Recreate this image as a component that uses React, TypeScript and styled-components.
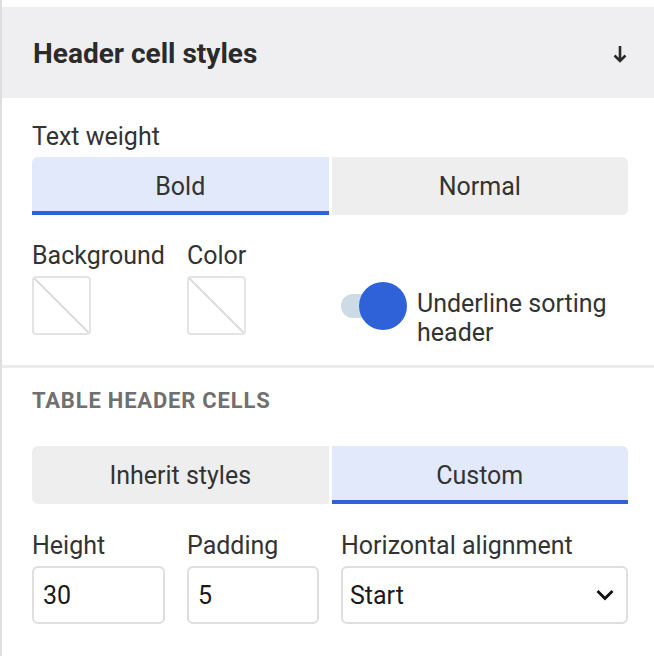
import React, { FC } from 'react';
import styled, { createGlobalStyle } from 'styled-components';

const GlobalStyle = createGlobalStyle`
  html, body {
    margin: 0;
    padding: 0;
    background: #ffffff;
  }
  body {
    font-family: Roboto, "Noto Sans", Arial, sans-serif;
    color: #2e2e2e;
  }
  * { box-sizing: border-box; }
`;

const Panel = styled.div`
  min-height: 100vh;
  border-left: 2px solid #dedede;
  padding-top: 7px;
`;

const Header = styled.div`
  height: 91px;
  background: #efeff1;
  display: flex;
  align-items: center;
  justify-content: space-between;
  padding: 2px 27px 0 31px;
`;

const Title = styled.h2`
  margin: 0;
  font-size: 28px;
  font-weight: 700;
  color: #2b2b2b;
`;

const Section = styled.div<{ $top: number; $bottom?: number }>`
  padding: ${p => p.$top}px 26px ${p => p.$bottom ?? 0}px 30px;
`;

const Label = styled.div`
  font-size: 25px;
  line-height: 30px;
  color: #333333;
  white-space: nowrap;
`;

const Caption = styled.div`
  font-size: 22px;
  line-height: 28px;
  font-weight: 700;
  letter-spacing: 0.8px;
  text-transform: uppercase;
  color: #707070;
`;

const Segmented = styled.div<{ $top: number }>`
  display: grid;
  grid-template-columns: 1fr 1fr;
  column-gap: 3px;
  height: 58px;
  margin-top: ${p => p.$top}px;
`;

const Segment = styled.div<{ $active?: boolean }>`
  display: flex;
  align-items: center;
  justify-content: center;
  font-size: 25px;
  color: #333333;
  background: ${p => (p.$active ? '#e1e9fb' : '#eeeeee')};
  border-bottom: 4px solid ${p => (p.$active ? '#2f62d8' : 'transparent')};
  padding-top: 4px;
  &:first-child {
    border-radius: ${p => (p.$active ? '6px 0 0 0' : '6px 0 0 6px')};
  }
  &:last-child {
    border-radius: ${p => (p.$active ? '0 6px 0 0' : '0 6px 6px 0')};
  }
`;

const FieldGrid = styled.div<{ $top: number }>`
  display: grid;
  grid-template-columns: 133px 132px 1fr;
  column-gap: 22px;
  margin-top: ${p => p.$top}px;
`;

const Field = styled.div`
  display: flex;
  flex-direction: column;
  gap: 5px;
`;

const Swatch = styled.div`
  width: 59px;
  height: 59px;
  border: 2px solid #e4e4e4;
  border-radius: 4px;
  background: linear-gradient(
    to top right,
    transparent calc(50% - 1px),
    #dedede calc(50% - 1px),
    #dedede calc(50% + 1px),
    transparent calc(50% + 1px)
  );
`;

const ToggleRow = styled.div`
  display: flex;
  align-items: flex-start;
  gap: 10px;
  margin-top: 41px;
`;

const Switch = styled.div`
  flex: none;
  height: 48px;
  display: flex;
  align-items: center;
`;

const Track = styled.div`
  width: 54px;
  height: 24px;
  border-radius: 12px;
  background: #cddce4;
`;

const Thumb = styled.div`
  width: 48px;
  height: 48px;
  margin-left: -36px;
  border-radius: 50%;
  background: #2f62d8;
`;

const ToggleText = styled.div`
  font-size: 25px;
  line-height: 29px;
  color: #333333;
  padding-top: 7px;
`;

const Divider = styled.div`
  height: 3px;
  background: #ebebeb;
  margin-top: 18px;
`;

const Input = styled.input`
  width: 100%;
  height: 58px;
  border: 2px solid #dedede;
  border-radius: 6px;
  padding: 0 9px;
  font-family: inherit;
  font-size: 25px;
  color: #1a1a1a;
  background: #ffffff;
  outline: none;
`;

const SelectBox = styled.div`
  height: 58px;
  border: 2px solid #dedede;
  border-radius: 6px;
  padding: 0 12px 0 7px;
  display: flex;
  align-items: center;
  justify-content: space-between;
  font-size: 25px;
  color: #1a1a1a;
`;

const ArrowDown: FC = () => (
  <svg width="14" height="18" viewBox="0 0 14 18" fill="none">
    <path d="M7 1v15M1.5 10.5L7 16l5.5-5.5" stroke="#2b2b2b" strokeWidth="2.6" />
  </svg>
);

const Chevron: FC = () => (
  <svg width="18" height="12" viewBox="0 0 18 12" fill="none">
    <path d="M1.5 2l7.5 7.5L16.5 2" stroke="#111111" strokeWidth="2.8" />
  </svg>
);

export default function App() {
  return (
    <>
      <GlobalStyle />
      <Panel>
        <Header>
          <Title>Header cell styles</Title>
          <ArrowDown />
        </Header>

        <Section $top={24}>
          <Label>Text weight</Label>
          <Segmented $top={5}>
            <Segment $active>Bold</Segment>
            <Segment>Normal</Segment>
          </Segmented>

          <FieldGrid $top={26}>
            <Field>
              <Label>Background</Label>
              <Swatch />
            </Field>
            <Field>
              <Label>Color</Label>
              <Swatch />
            </Field>
            <ToggleRow>
              <Switch>
                <Track />
                <Thumb />
              </Switch>
              <ToggleText>
                Underline sorting
                <br />
                header
              </ToggleText>
            </ToggleRow>
          </FieldGrid>
        </Section>

        <Divider />

        <Section $top={19}>
          <Caption>Table header cells</Caption>
          <Segmented $top={31}>
            <Segment>Inherit styles</Segment>
            <Segment $active>Custom</Segment>
          </Segmented>

          <FieldGrid $top={27}>
            <Field>
              <Label>Height</Label>
              <Input value="30" readOnly />
            </Field>
            <Field>
              <Label>Padding</Label>
              <Input value="5" readOnly />
            </Field>
            <Field>
              <Label>Horizontal alignment</Label>
              <SelectBox>
                Start
                <Chevron />
              </SelectBox>
            </Field>
          </FieldGrid>
        </Section>
      </Panel>
    </>
  );
}
